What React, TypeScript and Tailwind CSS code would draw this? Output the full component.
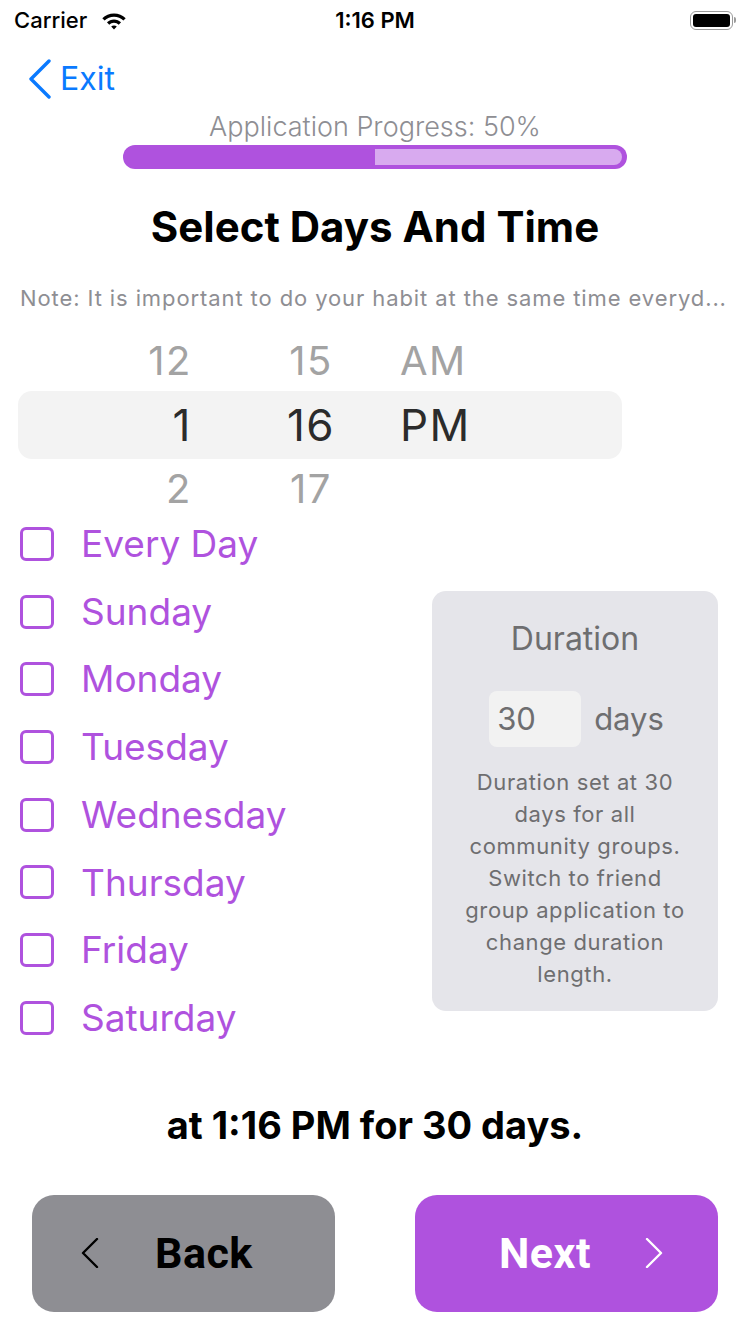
const days = [
  "Every Day",
  "Sunday",
  "Monday",
  "Tuesday",
  "Wednesday",
  "Thursday",
  "Friday",
  "Saturday",
];

function Chevron({ dir, className }: { dir: "left" | "right"; className?: string }) {
  // thin tall iOS style chevron
  return (
    <svg width="18" height="30" viewBox="0 0 18 30" className={className} fill="none">
      <path
        d={dir === "left" ? "M16 1 L2 15 L16 29" : "M2 1 L16 15 L2 29"}
        stroke="currentColor"
        strokeWidth="2.4"
        strokeLinecap="round"
        strokeLinejoin="round"
      />
    </svg>
  );
}

function StatusBar() {
  return (
    <div className="flex flex-row items-center justify-between h-[40px] px-[14px] text-black">
      <div className="flex flex-row items-center gap-[14px] w-[200px]">
        <span className="text-[22px] font-medium">Carrier</span>
        <svg width="26" height="20" viewBox="0 0 24 18">
          <path d="M12 3C7.8 3 4 4.6 1.2 7.3l2.1 2.2C5.6 7.3 8.7 6 12 6s6.4 1.3 8.7 3.5l2.1-2.2C20 4.6 16.2 3 12 3z" fill="black" />
          <path d="M12 8.5c-2.5 0-4.8 1-6.5 2.6l2.1 2.2c1.2-1.1 2.7-1.8 4.4-1.8s3.2.7 4.4 1.8l2.1-2.2C16.8 9.5 14.5 8.5 12 8.5z" fill="black" />
          <path d="M12 14c-1 0-1.9.4-2.6 1l2.6 2.8 2.6-2.8c-.7-.6-1.6-1-2.6-1z" fill="black" />
        </svg>
      </div>
      <span className="text-[22px] font-semibold">1:16 PM</span>
      <div className="flex flex-row justify-end items-center w-[200px]">
        <div className="w-[43px] h-[19px] rounded-[6px] border-[1.5px] border-[#9b9b9b] p-[2px]">
          <div className="w-full h-full rounded-[3px] bg-black" />
        </div>
        <div className="w-[2px] h-[6px] bg-[#9b9b9b] rounded-r-sm ml-[1px]" />
      </div>
    </div>
  );
}

function Picker() {
  return (
    <div className="flex flex-col ml-[18px] w-[604px] tracking-[1.5px]">
      <div className="flex flex-row items-center h-[61px] text-[40px] text-[#a3a3a3]">
        <div className="w-[174px] text-right">12</div>
        <div className="ml-[80px] w-[78px] text-center">15</div>
        <div className="ml-[50px]">AM</div>
      </div>
      <div className="flex flex-row items-center h-[68px] rounded-[14px] bg-[#f3f3f3] text-[44px] text-[#2b2b2b]">
        <div className="w-[174px] text-right">1</div>
        <div className="ml-[80px] w-[78px] text-center">16</div>
        <div className="ml-[50px]">PM</div>
      </div>
      <div className="flex flex-row items-center h-[60px] text-[40px] text-[#a3a3a3]">
        <div className="w-[174px] text-right">2</div>
        <div className="ml-[80px] w-[78px] text-center">17</div>
      </div>
    </div>
  );
}

function DayRow({ label }: { label: string }) {
  return (
    <label className="flex flex-row items-center h-[67.7px] pl-[20px] gap-[27px]">
      <span className="w-[34px] h-[34px] rounded-[6px] border-[3px] border-[#af52de]" />
      <span className="text-[37px] text-[#af52de]">{label}</span>
    </label>
  );
}

function DurationCard() {
  return (
    <div className="flex flex-col items-center w-[286px] h-[420px] mt-[81px] rounded-[14px] bg-[#e5e5ea] text-[#6e6e70]">
      <div className="text-[32px] mt-[24px]">Duration</div>
      <div className="flex flex-row items-center mt-[28px] ml-[3px] gap-[13px]">
        <div className="w-[92px] h-[56px] rounded-[8px] bg-[#f2f2f2] flex items-center pl-[8px] text-[31px]">
          30
        </div>
        <span className="text-[31px]">days</span>
      </div>
      <p className="mt-[19px] w-[240px] text-center text-[22px] tracking-[0.6px] leading-[32px]">
        Duration set at 30 days for all community groups. Switch to friend group application to change duration length.
      </p>
    </div>
  );
}

export default function App() {
  return (
    <div className="w-[750px] h-[1334px] bg-white flex flex-col font-['Inter',sans-serif] overflow-hidden">
      <StatusBar />

      <div className="flex flex-row items-center h-[78px] pl-[28px] text-[#0a7aff]">
        <svg width="24" height="40" viewBox="0 0 24 40" fill="none">
          <path d="M21 2 L3 20 L21 38" stroke="currentColor" strokeWidth="3.4" strokeLinecap="round" strokeLinejoin="round" />
        </svg>
        <span className="text-[32px] ml-[8px]">Exit</span>
      </div>

      <div className="flex flex-col items-center">
        <div className="text-[27px] font-light text-[#8e8e93] leading-[30px] -mt-[6px]">Application Progress: 50%</div>
        <div className="w-[504px] h-[24px] mt-[3px] rounded-full bg-[#af52de] flex flex-row items-center pr-[5px]">
          <div className="w-[252px]" />
          <div className="flex-1 h-[16px] rounded-r-full bg-[#d8aaef]" />
        </div>
      </div>

      <h1 className="text-center text-[42px] font-bold text-black mt-[34px] leading-[48px]">
        Select Days And Time
      </h1>

      <div className="text-[22px] text-[#8e8e93] mt-[34px] pl-[20px] whitespace-nowrap leading-[26px] tracking-[0.9px]">
        Note: It is important to do your habit at the same time everyd...
      </div>

      <div className="mt-[19px]">
        <Picker />
      </div>

      <div className="flex flex-row items-start -mt-[9px]">
        <div className="flex flex-col w-[432px]">
          {days.map((d) => (
            <DayRow key={d} label={d} />
          ))}
        </div>
        <DurationCard />
      </div>

      <div className="text-center text-[38px] font-bold text-black mt-[52px] leading-[42px]">
        at 1:16 PM for 30 days.
      </div>

      <div className="flex flex-row justify-between px-[32px] mt-[49px]">
        <button className="w-[303px] h-[117px] rounded-[22px] bg-[#8e8e93] flex flex-row items-center pl-[49px] text-black">
          <Chevron dir="left" />
          <span className="ml-[56px] text-[43px] font-bold font-['Roboto',sans-serif] tracking-[0.5px]">Back</span>
        </button>
        <button className="w-[303px] h-[117px] rounded-[22px] bg-[#af52de] flex flex-row items-center pl-[84px] text-white">
          <span className="text-[43px] font-bold font-['Roboto',sans-serif] tracking-[0.5px]">Next</span>
          <Chevron dir="right" className="ml-[54px]" />
        </button>
      </div>
    </div>
  );
}
